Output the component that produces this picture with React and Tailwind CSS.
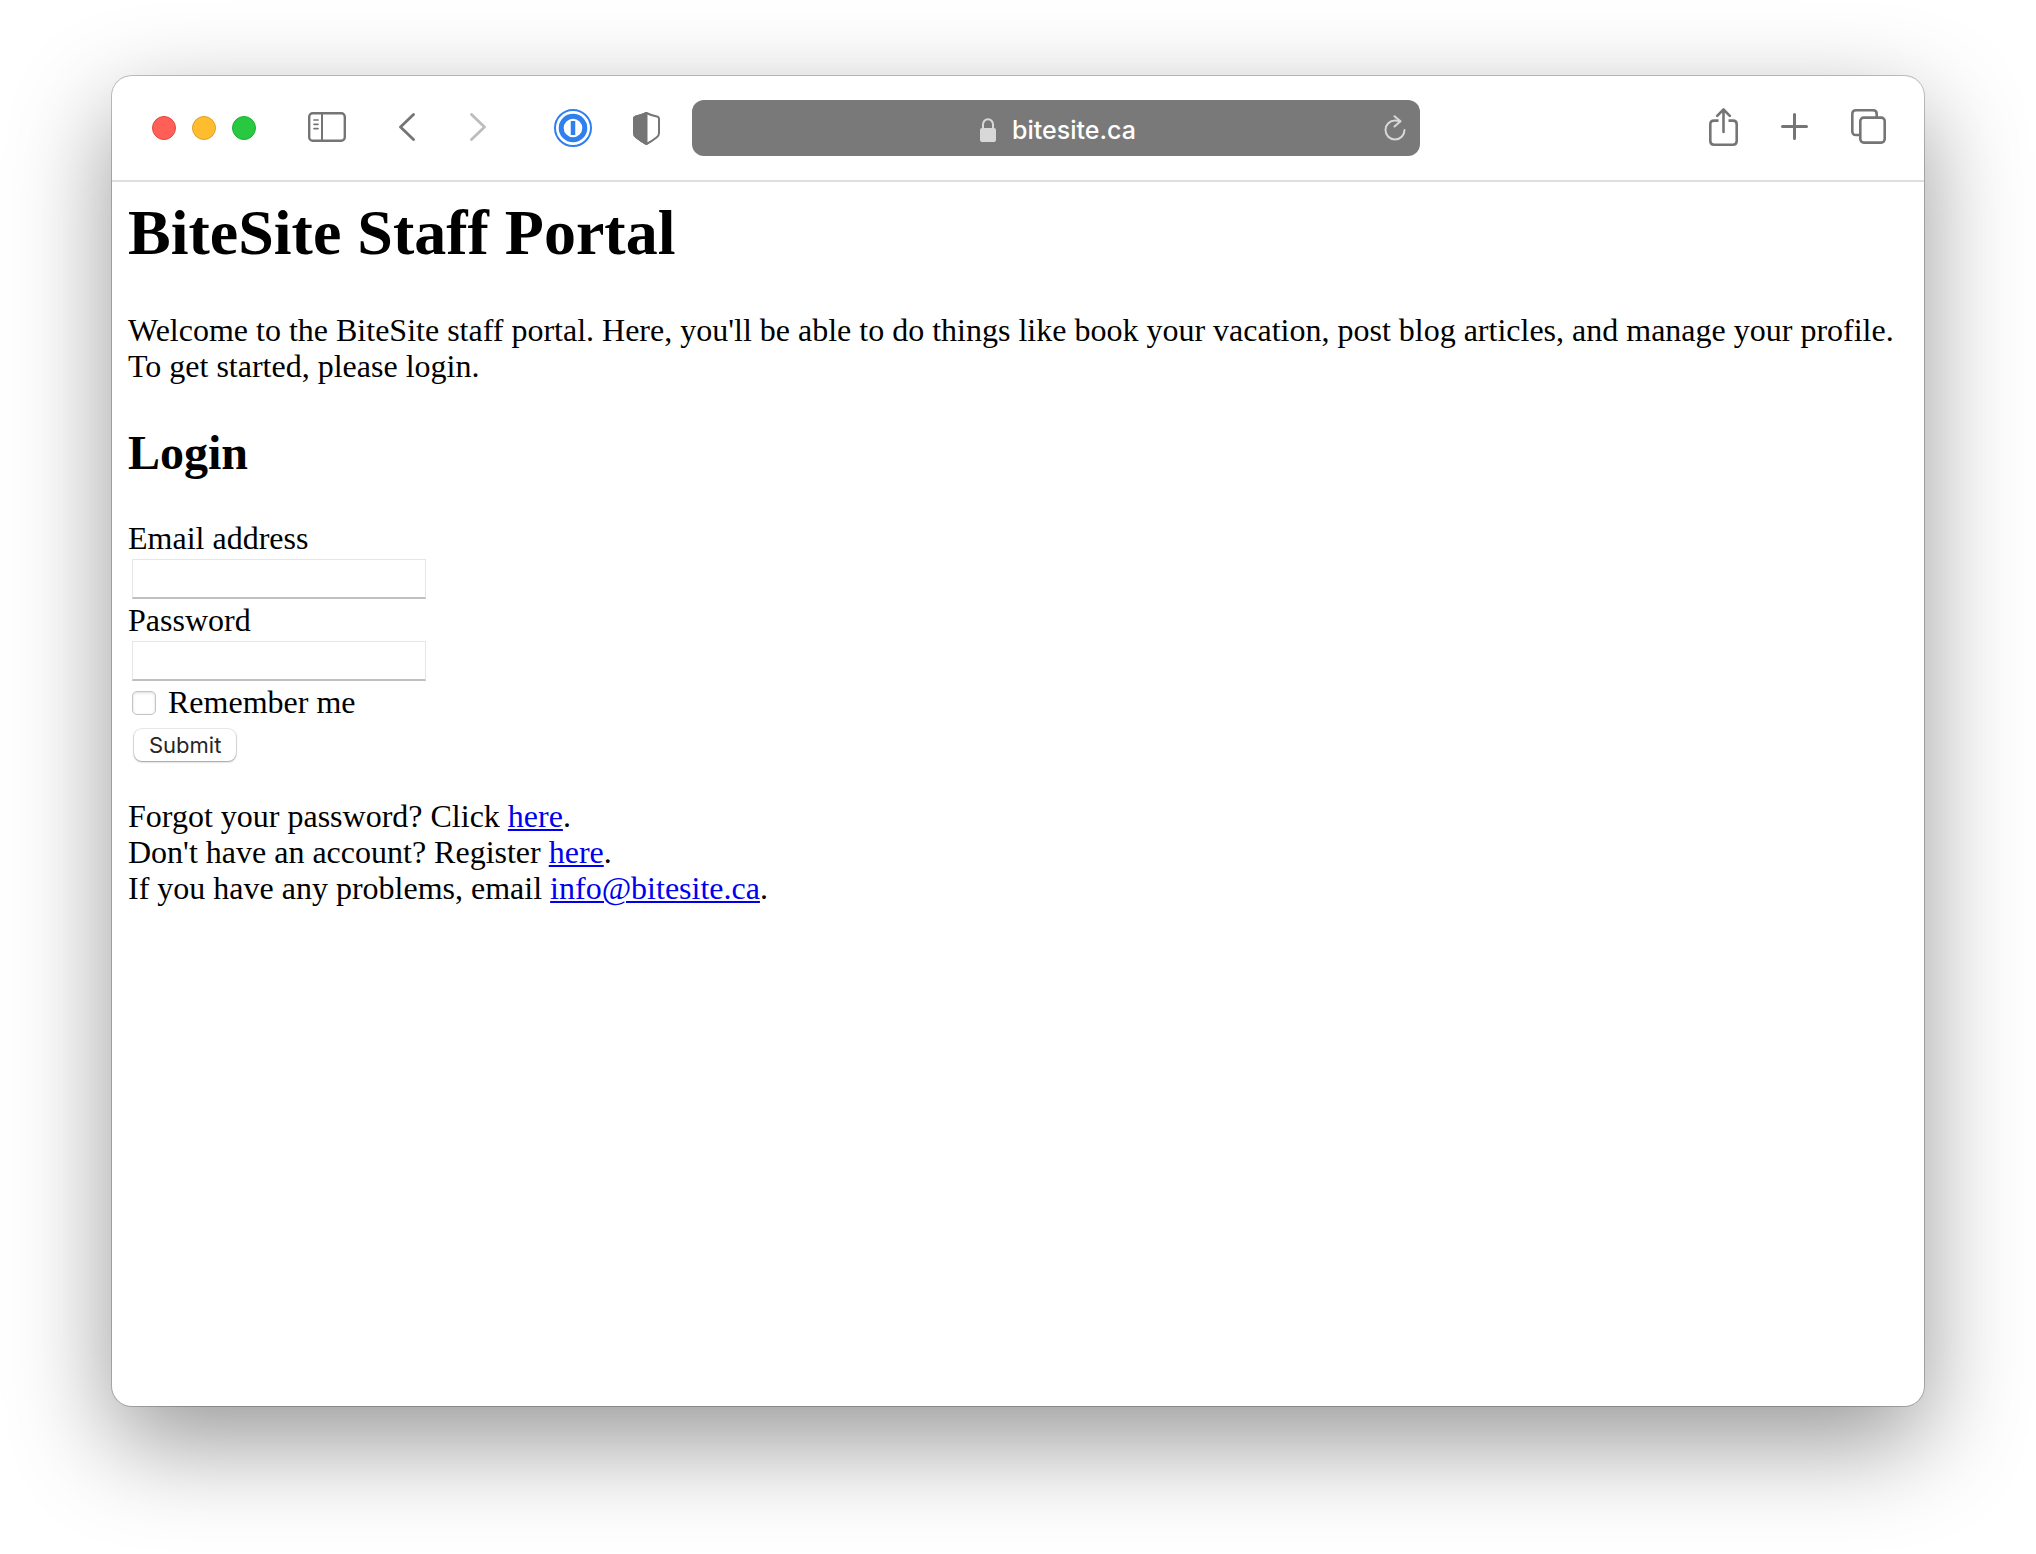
import React from "react";

function Toolbar() {
  return (
    <header className="flex h-[106px] items-center border-b-2 border-[#dedede] pr-[38px] pl-10 text-[#757575]">
      <div className="flex shrink-0 items-center">
        <div className="flex gap-4">
          <button type="button" aria-label="Close" className="size-6 rounded-full border border-[#e2463f] bg-[#ff5f57]" />
          <button type="button" aria-label="Minimize" className="size-6 rounded-full border border-[#e0a028] bg-[#febc2e]" />
          <button type="button" aria-label="Zoom" className="size-6 rounded-full border border-[#1fae34] bg-[#28c840]" />
        </div>
        <button type="button" aria-label="Show sidebar" className="ml-[52px] pb-[2px]">
          <svg width="38" height="30" viewBox="0 0 38 30" fill="none" stroke="currentColor" strokeWidth="2.400">
            <rect x="1.200" y="1.200" width="35.600" height="27.600" rx="3.500" />
            <path d="M14 1v28" strokeWidth="2" />
            <path d="M6 8h4M6 12.300h4M6 16.600h4" strokeWidth="1.700" strokeLinecap="round" />
          </svg>
        </button>
        <button type="button" aria-label="Back" className="ml-[53px] pb-[2px]">
          <svg width="16" height="28" viewBox="0 0 16 28" fill="none" stroke="currentColor" strokeWidth="2.800" strokeLinecap="round" strokeLinejoin="round">
            <path d="M14.500 1.500L1.500 14l13 12.500" />
          </svg>
        </button>
        <button type="button" aria-label="Forward" className="ml-[55px] pb-[2px] text-[#bdbdbd]">
          <svg width="16" height="28" viewBox="0 0 16 28" fill="none" stroke="currentColor" strokeWidth="2.800" strokeLinecap="round" strokeLinejoin="round">
            <path d="M1.500 1.500L14.500 14l-13 12.500" />
          </svg>
        </button>
        <button type="button" aria-label="Password manager" className="ml-[68px] text-[#2f7fee]">
          <svg width="38" height="38" viewBox="0 0 38 38" fill="none" stroke="currentColor">
            <circle cx="19" cy="19" r="18" strokeWidth="2" />
            <circle cx="19" cy="19" r="11.800" strokeWidth="5" />
            <path d="M19 12v14" strokeWidth="4.500" />
          </svg>
        </button>
        <button type="button" aria-label="Privacy report" className="ml-[41px]">
          <svg width="27" height="33" viewBox="0 0 27 33" fill="none" stroke="currentColor" strokeWidth="2" strokeLinejoin="round">
            <path d="M13.500 1C17 2.800 20.500 4 24 4.500q2 .4 2 2.500v14q0 2.600-2.200 4.200-5 4-10.300 6.800Q8.200 29.200 3.200 25.200 1 23.600 1 21V7q0-2.100 2-2.500Q7 4 13.500 1z" />
            <path d="M13.500 1v31Q8.200 29.200 3.200 25.200 1 23.600 1 21V7q0-2.100 2-2.500Q7 4 13.500 1z" fill="currentColor" />
          </svg>
        </button>
      </div>

      <div className="ml-8 flex h-14 max-w-[728px] flex-1 items-center rounded-xl bg-[#797979] pr-[14px] pl-10">
        <div className="flex flex-1 items-center justify-center gap-4 pt-[3px]">
          <svg width="16" height="24" viewBox="0 0 16 24" fill="none" className="text-[#d8d8d8]">
            <rect y="10" width="16" height="14" rx="2" fill="currentColor" />
            <path d="M3 11V6.500a5 5.300 0 0 1 10 0V11" stroke="currentColor" strokeWidth="2" />
          </svg>
          <span className="font-['Inter','Liberation_Sans',sans-serif] text-[25px] leading-8 font-medium text-white">bitesite.ca</span>
        </div>
        <button type="button" aria-label="Reload" className="text-[#d8d8d8]">
          <svg width="22" height="26" viewBox="0 0 22 26" fill="none" stroke="currentColor" strokeWidth="2" strokeLinecap="round" strokeLinejoin="round">
            <path d="M20.500 15A9.500 9.500 0 1 1 11 5.500q2.500 0 5 .8" />
            <path d="M10.500 1.200L16.500 6.300L10.500 11.500" />
          </svg>
        </button>
      </div>

      <div className="ml-auto flex shrink-0 items-center pb-[3px]">
        <button type="button" aria-label="Share">
          <svg width="29" height="38" viewBox="0 0 29 38" fill="none" stroke="currentColor" strokeWidth="2.600" strokeLinecap="round" strokeLinejoin="round">
            <path d="M9.500 12.600H5q-3.700 0-3.700 3.700v16.700q0 3.700 3.700 3.700h19q3.700 0 3.700-3.700V16.300q0-3.700-3.700-3.700h-4.500" strokeLinecap="butt" />
            <path d="M14.500 24V2M8.200 7.800l6.300-6.300 6.300 6.300" />
          </svg>
        </button>
        <button type="button" aria-label="New tab" className="ml-[43px]">
          <svg width="27" height="27" viewBox="0 0 27 27" fill="none" stroke="currentColor" strokeWidth="3" strokeLinecap="round">
            <path d="M13.500 1.500v24M1.500 13.500h24" />
          </svg>
        </button>
        <button type="button" aria-label="Show tabs" className="ml-[43px]">
          <svg width="35" height="35" viewBox="0 0 35 35" fill="none" stroke="currentColor" strokeWidth="2.600">
            <rect x="9.300" y="8.600" width="24.400" height="25" rx="3.500" />
            <path d="M9 26H5q-3.700 0-3.700-3.700V5q0-3.700 3.700-3.700h17q3.700 0 3.700 3.700v3.500" />
          </svg>
        </button>
      </div>
    </header>
  );
}

function TextField({ id, label, type }) {
  return (
    <div>
      <label htmlFor={id} className="block">{label}</label>
      <input
        id={id}
        name={id}
        type={type}
        className="my-[3px] ml-1 block h-10 w-[294px] border border-b-2 border-[#e6e6e6] border-b-[#bfbfbf] bg-white px-1 font-['Inter','Liberation_Sans',sans-serif] text-[22px] outline-none"
      />
    </div>
  );
}

function TextLink({ href, children }) {
  return (
    <a href={href} className="text-[#0000ee] underline decoration-2 underline-offset-2">{children}</a>
  );
}

export default function App() {
  return (
    <div className="flex min-h-screen bg-white px-28 pt-[76px] pb-[148px]">
      <div className="flex-1 overflow-clip rounded-[20px] bg-white shadow-[0_0_0_1px_rgba(0,0,0,0.22),0_36px_100px_rgba(0,0,0,0.41)]">
        <Toolbar />
        <main className="px-4 pt-[15px] pb-4 font-['Liberation_Serif','Times_New_Roman',serif] text-[32px] leading-9 text-black">
          <h1 className="text-[64px] leading-[72px] font-bold">BiteSite Staff Portal</h1>
          <p className="mt-[43px]">
            Welcome to the BiteSite staff portal. Here, you'll be able to do things like book your vacation, post blog articles, and manage your profile. To get started, please login.
          </p>
          <h2 className="mt-[42px] text-[48px] leading-[54px] font-bold">Login</h2>
          <form className="mt-10" onSubmit={(e) => e.preventDefault()}>
            <TextField id="email" label="Email address" type="email" />
            <TextField id="password" label="Password" type="password" />
            <div className="flex items-center">
              <input
                id="remember"
                type="checkbox"
                className="mt-[2px] mr-3 ml-1 size-6 appearance-none rounded-[5px] border border-[#c4c4c4] bg-white shadow-[inset_0_1px_3px_rgba(0,0,0,0.15)] checked:bg-[#2f7fee]"
              />
              <label htmlFor="remember">Remember me</label>
            </div>
            <button
              type="submit"
              className="mt-[9px] ml-[6px] block h-8 rounded-lg bg-white px-[15px] font-['Inter','Liberation_Sans',sans-serif] text-[22px] leading-8 text-[#262626] shadow-[0_0_0_1px_rgba(0,0,0,0.08),0_1px_2px_rgba(0,0,0,0.35)]"
            >
              Submit
            </button>
          </form>
          <p className="mt-[37px]">
            Forgot your password? Click <TextLink href="#forgot">here</TextLink>.<br />
            Don't have an account? Register <TextLink href="#register">here</TextLink>.<br />
            If you have any problems, email <TextLink href="mailto:info@bitesite.ca">info@bitesite.ca</TextLink>.
          </p>
        </main>
      </div>
    </div>
  );
}
